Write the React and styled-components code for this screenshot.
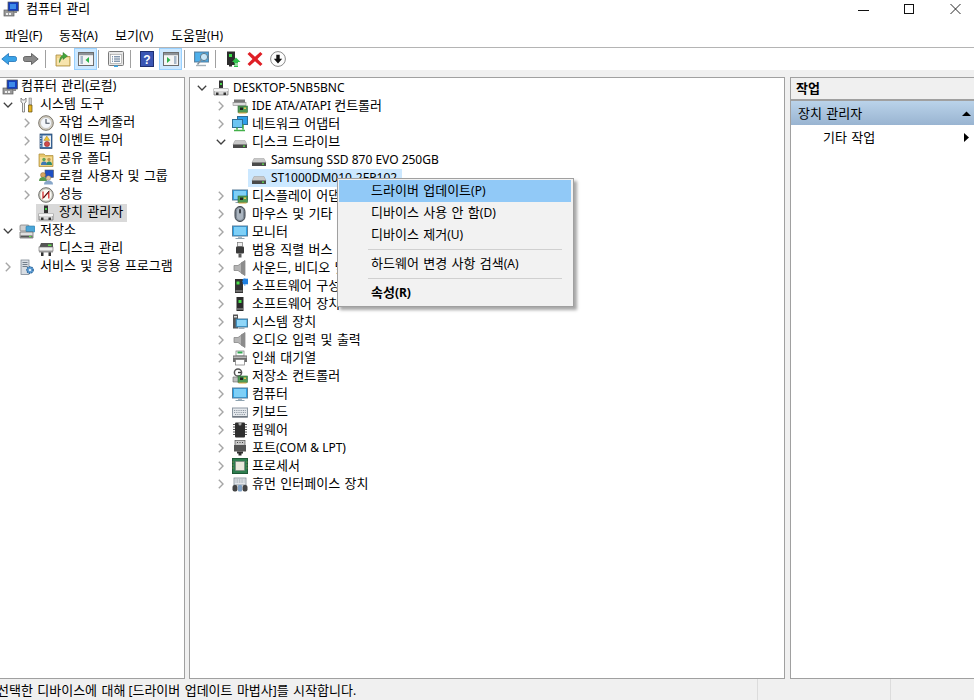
import React from "react";
import styled, { createGlobalStyle } from "styled-components";

const Global = createGlobalStyle`
  html, body { margin: 0; padding: 0; background: #fff; }
  body { font-family: "Noto Sans", "Noto Sans CJK KR", "Liberation Sans", sans-serif; font-size: 12px; color: #000; }
`;

const Window = styled.div`
  position: relative; width: 974px; height: 700px; overflow: hidden;
  display: flex; flex-direction: column; background: #fff;
`;
const TitleBar = styled.header`
  height: 25px; flex: none; display: flex; align-items: flex-start; padding: 1px 13px 0 3px; box-sizing: border-box;
`;
const TitleText = styled.span` margin: 1px 0 0 7px; line-height: 14px; `;
const WindowControls = styled.div`
  margin-left: auto; display: flex; gap: 35px; padding-top: 3px;
`;
const ControlGlyph = styled.svg` width: 11px; height: 10px; display: block; `;
const MenuBar = styled.nav`
  height: 22px; flex: none; display: flex; align-items: center; padding-left: 5px; border-bottom: 1px solid #b4b4b4;
  box-sizing: content-box;
`;
const MenuItem = styled.span` width: ${p => p.$w}px; line-height: 20px; `;
const Toolbar = styled.div` height: 22px; flex: none; display: flex; align-items: center; `;
const ToolButton = styled.div`
  width: ${p => p.$w || 23}px; height: 22px; margin-left: ${p => p.$ml || 0}px; box-sizing: border-box; flex: none;
  display: flex; align-items: center; justify-content: center;
  background: ${p => p.$on ? "#cce8ff" : "transparent"};
  border: 1px solid ${p => p.$on ? "#99d1ff" : "transparent"};
`;
const ToolSep = styled.div` width: 1px; height: 18px; background: #a0a0a0; flex: none; margin-left: ${p => p.$ml}px; `;
const Main = styled.main`
  flex: 1; display: flex; background: #f0f0f0; padding-top: 7px; min-height: 0;
`;
const Panel = styled.section`
  box-sizing: border-box; width: ${p => p.$w}px; margin-left: ${p => p.$ml || 0}px; flex: none; height: 602px;
  background: #fff; border: 1px solid #a0a0a0; border-left-width: ${p => p.$noLeft ? 0 : 1}px;
  border-right-width: ${p => p.$noRight ? 0 : 1}px; overflow: hidden; padding-top: ${p => p.$pt || 0}px;
`;
const Row = styled.div`
  position: relative; height: 18px; display: flex; align-items: center; padding-left: ${p => p.$pad}px; white-space: nowrap;
`;
const Hilite = styled.span`
  position: absolute; top: 0; bottom: 0; left: ${p => p.$left}px; width: ${p => p.$w}px; background: ${p => p.$c};
`;
const Expander = styled.span`
  width: 16px; height: 16px; flex: none; display: flex; align-items: center; position: relative;
`;
const Chevron = styled.svg` width: 10px; height: 10px; display: block; `;
const IconWrap = styled.span` position: relative; width: 16px; height: 16px; flex: none; display: block; `;
const Label = styled.span`
  position: relative; margin-left: ${p => p.$gap ?? 5}px; line-height: 16px;
  transform: translateY(${p => p.$lift}px);
`;
const Hangul = styled.span` font-size: 13px; word-spacing: 1px; line-height: 1; `;
const ActionHead = styled.div`
  height: 21px; background: #f0f0f0; border-bottom: 2px solid #a0a0a0; box-sizing: content-box; font-weight: 700; padding-left: 5px;
  line-height: 22px;
`;
const ActionGroup = styled.div`
  height: 24px; background: linear-gradient(#bad3ea, #99b4d1); display: flex; align-items: center; padding: 0 3px 0 7px;
  justify-content: space-between;
`;
const ActionItem = styled.div`
  height: 24px; display: flex; align-items: center; justify-content: space-between; padding: 0 3px 0 32px;
`;
const Tri = styled.svg` width: 9px; height: 9px; display: block; `;
const StatusBar = styled.footer`
  height: 21px; flex: none; background: #f0f0f0; display: flex; align-items: center; overflow: hidden;
`;
const StatusCell = styled.div`
  height: 21px; line-height: 23px; width: ${p => p.$w}px; flex: none; box-sizing: border-box; white-space: nowrap;
  border-right: 1px solid #dcdcdc; text-indent: ${p => p.$indent || 0}px;
`;
const ContextMenu = styled.div`
  position: absolute; left: 337px; top: 178px; width: 237px; height: 129px; box-sizing: border-box;
  background: #f2f2f2; border: 1px solid #a0a0a0; box-shadow: 3px 3px 3px rgba(0,0,0,0.35); padding: 1px;
`;
const CtxItem = styled.div`
  height: 22px; line-height: 22px; width: 232px; padding-left: 32px; box-sizing: border-box;
  background: ${p => p.$on ? "#91c9f7" : "transparent"}; font-weight: ${p => p.$bold ? 700 : 400};
`;
const CtxSep = styled.div` height: 1px; background: #d0d0d0; margin: 3px 12px 3px 29px; width: 194px; `;

const T = ({ children }) => (
  <>
    {children.split(/([\uAC00-\uD7A3]+(?: +[\uAC00-\uD7A3]+)*)/).map((part, i) =>
      i % 2 ? <Hangul key={i}>{part}</Hangul> : part
    )}
  </>
);

const Ic = ({ children, s = 16 }) => (
  <svg width={s} height={s} viewBox="0 0 16 16" style={{ display: "block" }}>{children}</svg>
);

const drive = (
  <>
    <path d="M3 6.5h10l2 4H1z" fill="#c9c9c9" stroke="#a8a8a8" strokeWidth=".6" />
    <rect x="1" y="10.5" width="14" height="3.5" fill="#4a4a4a" />
    <rect x="11" y="11.5" width="2" height="1.3" fill="#5fe04a" />
  </>
);
const tower = (
  <>
    <rect x="4.5" y="1" width="7" height="14" fill="#2b2b2b" />
    <rect x="6.5" y="4" width="3" height="3" fill="#49e04a" />
    <rect x="5" y="12" width="6" height="2" fill="#6a6a6a" />
  </>
);
const mon = (
  <>
    <rect x=".5" y="2" width="15" height="10" fill="#2aa3ea" stroke="#5a7f9a" />
    <rect x="2" y="3" width="12" height="8" fill="#7fd0f7" />
    <rect x="6" y="12" width="4" height="2" fill="#a8b8c4" />
    <rect x="3.5" y="14" width="9" height="1" fill="#8ea3b1" />
  </>
);
const card = (
  <>
    <rect x="6" y="8" width="9.5" height="6.5" fill="#4f9a55" stroke="#2f6a38" strokeWidth=".6" />
    <rect x="8" y="9.5" width="3" height="2.5" fill="#222" />
    <rect x="12" y="9.5" width="2" height="1.5" fill="#e6c84a" />
    <path d="M6.5 14.5h8v1h-8z" fill="#d8a93a" />
  </>
);
const speaker = (
  <>
    <path d="M2 5.5h4l7-5v15l-7-5H2z" fill="#b5b5b5" stroke="#7d7d7d" strokeWidth=".7" />
    <path d="M9 2.5v11l4 2V.5z" fill="#8c8c8c" />
  </>
);
const server2 = (
  <>
    <rect x="3" y="1" width="8" height="14" fill="#333" />
    <rect x="4.5" y="3.5" width="3" height="3" fill="#4ae04a" />
    <rect x="3.5" y="12" width="7" height="2" fill="#6d6d6d" />
  </>
);

const ICONS = {
  computer: (
    <>
      <rect x="1" y="9" width="10" height="6" fill="#9a9a9a" stroke="#5d5d5d" strokeWidth=".7" />
      <rect x="3" y="12" width="2" height="2" fill="#eee" /><rect x="6" y="12" width="2" height="2" fill="#eee" />
      <rect x="5" y="1" width="10.5" height="9" fill="#143fbf" stroke="#555" strokeWidth=".7" />
      <rect x="7" y="3" width="6" height="5" fill="#3d8be8" />
      <rect x="11" y="10" width="3" height="2" fill="#8b8b8b" />
    </>
  ),
  tools: (
    <>
      <path d="M2 1v4l1.5 1v9h2V6L7 5V1L5.5 3h-2z" fill="#f3f3f3" stroke="#707070" strokeWidth=".8" />
      <rect x="10" y="1" width="2.5" height="7" fill="#cfcfcf" stroke="#777" strokeWidth=".5" />
      <path d="M9.5 8h3.5v7h-3.5z" fill="#e7b422" stroke="#5b4a10" strokeWidth=".7" />
    </>
  ),
  clock: (
    <>
      <circle cx="8" cy="8" r="7.3" fill="#d9d3c3" stroke="#77736a" strokeWidth="1" />
      <circle cx="8" cy="8" r="5.5" fill="#f4f7fb" stroke="#aaa" strokeWidth=".5" />
      <path d="M8 4v4.3h3.6" fill="none" stroke="#3f4a59" strokeWidth="1.1" />
    </>
  ),
  eventlog: (
    <>
      <rect x="2" y="1" width="12" height="14.5" fill="#3d6ea5" stroke="#27466b" strokeWidth=".7" />
      <rect x="4.5" y="2.5" width="8.5" height="11.5" fill="#eef1f4" />
      <path d="M8.8 3l3 4.4h-6z" fill="#f3c42f" stroke="#8a6d10" strokeWidth=".4" />
      <circle cx="9" cy="11" r="2.6" fill="#d14a4a" stroke="#7c2020" strokeWidth=".5" />
      <path d="M2 3h1.5M2 5.5h1.5M2 8h1.5M2 10.5h1.5M2 13h1.5" stroke="#fff" strokeWidth=".7" />
    </>
  ),
  shared: (
    <>
      <path d="M1 3h5l1.5 1.5H15v11H1z" fill="#e8c76c" stroke="#a98a36" strokeWidth=".7" />
      <rect x="2" y="6" width="12" height="8.5" fill="#f4dc95" />
      <circle cx="6" cy="8.5" r="1.7" fill="#63a35c" /><path d="M3 14c0-3 1.5-3.5 3-3.5s3 .5 3 3.5z" fill="#3f78b5" />
      <circle cx="11" cy="8.5" r="1.7" fill="#c59a52" /><path d="M8.5 14c0-3 1-3.5 2.5-3.5s3 .5 3 3.5z" fill="#2f8a6e" />
    </>
  ),
  users: (
    <>
      <rect x="7" y="1" width="8.5" height="7.5" fill="#1e4fc4" stroke="#5b5b5b" strokeWidth=".6" />
      <circle cx="5" cy="6" r="2.5" fill="#d9a55f" stroke="#7c5a2d" strokeWidth=".4" />
      <path d="M1 12c0-3 2-4 4-4s4 1 4 4z" fill="#5a9a4e" />
      <circle cx="10.5" cy="9" r="2.3" fill="#e2c29b" stroke="#8a6d4a" strokeWidth=".4" />
      <path d="M6 15.5c0-3 2.2-4 4.5-4s4.5 1 4.5 4z" fill="#88a7c9" />
    </>
  ),
  perf: (
    <>
      <circle cx="8" cy="8" r="7.3" fill="#cfcfc6" stroke="#6f6f6a" strokeWidth="1" />
      <circle cx="8" cy="8" r="5.6" fill="#fbfbf6" />
      <path d="M5 4.5V11L10.8 5v6.5" fill="none" stroke="#d22a2a" strokeWidth="1.3" />
      <path d="M11 4L5.5 11" stroke="#1b1b1b" strokeWidth=".9" />
    </>
  ),
  device: (
    <>
      <rect x="6" y="0.5" width="4" height="8" fill="#333" />
      <rect x="7" y="3" width="2" height="2" fill="#46d04a" />
      <path d="M1 8.5h14V15H1z" fill="#d8d8d8" stroke="#6a6a6a" strokeWidth=".7" />
      <rect x="1" y="8.5" width="14" height="2.5" fill="#f4f4f4" />
      <rect x="3" y="12.5" width="2.5" height="2.5" fill="#333" /><rect x="10.5" y="12.5" width="2.5" height="2.5" fill="#333" />
    </>
  ),
  storage: (
    <>
      <rect x="1" y="2" width="9" height="6" rx="1" fill="#cfcfcf" stroke="#777" strokeWidth=".7" />
      <rect x="7" y="3" width="9" height="6" rx="1" fill="#4aa6d8" stroke="#2c7aa6" strokeWidth=".6" />
      <path d="M1 9h13v6H1z" fill="#e0e0e0" stroke="#5f5f5f" strokeWidth=".7" />
      <rect x="1.5" y="12.5" width="12" height="2" fill="#555" />
      <rect x="10" y="13" width="2.5" height="1" fill="#5ee04a" />
    </>
  ),
  diskmgmt: (
    <>
      <path d="M3 2h12v5H1z" fill="#555" />
      <rect x="1" y="6" width="14" height="4" fill="#efefef" stroke="#666" strokeWidth=".6" />
      <rect x="10" y="3.5" width="3.5" height="1.5" fill="#5ee04a" />
      <rect x="3" y="11" width="2.5" height="4" fill="#333" /><rect x="10.5" y="11" width="2.5" height="4" fill="#333" />
      <rect x="1" y="10" width="14" height="1.5" fill="#999" />
    </>
  ),
  services: (
    <>
      <rect x="2" y="1" width="8" height="14.5" fill="#d8dde3" stroke="#6f7a86" strokeWidth=".7" />
      <path d="M3.5 3.5h5M3.5 5.5h5M3.5 7.5h5" stroke="#66727f" strokeWidth=".9" />
      <circle cx="11" cy="11" r="3.2" fill="#5f9ed6" stroke="#2f6a9e" strokeWidth="1.4" strokeDasharray="1.4 .9" />
      <circle cx="11" cy="11" r="1.1" fill="#fff" />
    </>
  ),
  ide: (
    <>
      <path d="M2 1.5h11v4H2z" fill="#777" /><rect x="1" y="4.5" width="13" height="3" fill="#ddd" stroke="#777" strokeWidth=".5" />
      {card}
    </>
  ),
  network: (
    <>
      <rect x="5.5" y=".5" width="10" height="8" fill="#2d9fe8" stroke="#2f6d94" /><rect x=".5" y="3.5" width="10" height="8" fill="#6cc4f2" stroke="#2f6d94" />
      <path d="M5 11.5v2M11 8.5v5M2 14.5h11" stroke="#43b04a" strokeWidth="1.6" />
    </>
  ),
  disk: drive,
  display: <>{mon}{card}</>,
  mouse: (
    <>
      <rect x="3" y="0.5" width="10" height="15" rx="5" fill="#7f8a96" stroke="#3a3f46" />
      <rect x="5" y="2" width="6" height="12" rx="3" fill="#aab4bf" />
      <rect x="7" y="3" width="2" height="4.5" rx="1" fill="#3a3f46" />
    </>
  ),
  monitor: mon,
  usb: (
    <>
      <rect x="5.5" y="0.5" width="5" height="4" fill="#ececec" stroke="#777" strokeWidth=".7" />
      <rect x="4" y="4.5" width="8" height="7" rx="1" fill="#3a3a3a" />
      <rect x="6.5" y="11.5" width="3" height="4" fill="#5a5a5a" />
    </>
  ),
  sound: speaker,
  softcomp: (
    <>
      {server2}
      <path d="M11 1h5v5h-5zM12.8 0v8M10 3.5h6" fill="#1f7fe0" stroke="#1f7fe0" strokeWidth=".6" />
    </>
  ),
  softdev: tower,
  sysdev: (
    <>
      <rect x="1" y="0.5" width="5" height="14" fill="#555" />
      <rect x="2" y="2" width="3" height="1.5" fill="#ddd" />
      <rect x="4" y="5" width="11.5" height="8" fill="#33a5e8" stroke="#4c7a96" />
      <rect x="5" y="6" width="9.5" height="6" fill="#8fd6f8" />
      <rect x="6.5" y="13" width="6" height="2" fill="#9fb0bc" />
    </>
  ),
  printer: (
    <>
      <rect x="4" y="1" width="8" height="5" fill="#ffffff" stroke="#777" strokeWidth=".7" />
      <rect x="5.5" y="1.5" width="5" height="2" fill="#34a853" />
      <rect x="1" y="5.5" width="14" height="6.5" fill="#6e6e6e" />
      <rect x="3.5" y="9.5" width="9" height="5.5" fill="#fff" stroke="#777" strokeWidth=".7" />
      <rect x="1.5" y="6.5" width="13" height="1.5" fill="#b8b8b8" />
    </>
  ),
  storagectl: (
    <>
      <circle cx="6" cy="4.5" r="3.6" fill="none" stroke="#555" strokeWidth="1.5" />
      <path d="M6 4.5h3" stroke="#333" strokeWidth="1.4" />
      <path d="M1 9h9v5H1z" fill="#bdbdbd" stroke="#666" strokeWidth=".6" />
      {card}
    </>
  ),
  keyboard: (
    <>
      <rect x="0.5" y="4" width="15" height="9" fill="#e4e8ec" stroke="#8d98a3" />
      <path d="M2 6.5h12M2 8.5h12M3 10.5h10" stroke="#8e98a3" strokeWidth="1.1" strokeDasharray="1 .8" />
      <rect x="0.5" y="12" width="15" height="1.5" fill="#6f7780" />
    </>
  ),
  firmware: (
    <>
      <rect x="3" y="0.5" width="10" height="15" rx="1" fill="#2e2e2e" />
      <path d="M1 2.5h14M1 5h14M1 7.5h14M1 10h14M1 12.5h14" stroke="#555" strokeWidth="1" strokeDasharray="2 10" />
      <path d="M6.5.5h3v1.5a1.5 1.5 0 0 1-3 0z" fill="#aaa" />
    </>
  ),
  port: (
    <>
      <rect x="3" y="0.5" width="10" height="5" fill="#c8c8c8" stroke="#555" strokeWidth=".7" />
      <path d="M5 2.5h1M7.5 2.5h1M10 2.5h1" stroke="#444" strokeWidth="1" />
      <rect x="2" y="5" width="12" height="6.5" fill="#555" />
      <path d="M5 11.5h6v2H9.5v2h-3v-2H5z" fill="#2e2e2e" />
    </>
  ),
  cpu: (
    <>
      <rect x=".5" y=".5" width="15" height="15" fill="#2e7d4f" stroke="#1d5a36" />
      <rect x="3.5" y="3.5" width="9" height="9" fill="#e9e9dc" stroke="#777" strokeWidth=".5" />
      <path d="M.5 4h1M.5 7h1M.5 10h1M14.5 4h1M14.5 7h1M14.5 10h1" stroke="#d8b24a" strokeWidth=".7" />
    </>
  ),
  hid: (
    <>
      <rect x="2" y="2" width="12" height="7" fill="#e2e6ea" stroke="#7f8a95" strokeWidth=".8" />
      <path d="M3.5 4h9M3.5 6h9" stroke="#8d97a1" strokeDasharray="1 .7" />
      <rect x="0.5" y="9" width="5" height="6.5" rx="2" fill="#444" />
      <rect x="10.5" y="9" width="5" height="6.5" rx="2" fill="#444" />
      <rect x="6" y="9" width="4" height="6.5" rx="1" fill="#7fa0c4" />
    </>
  ),
  back: (
    <path d="M.8 8L7.5 2.5v3h6.2c1.2 0 1.8.8 1.8 1.8v1.4c0 1-.6 1.8-1.8 1.8H7.5v3z" fill="#3aa3e8" stroke="#1d6fb4" strokeWidth=".8" />
  ),
  forward: (
    <path d="M15.2 8L8.5 2.5v3H2.3C1.1 5.5.5 6.3.5 7.3v1.4c0 1 .6 1.8 1.8 1.8h6.2v3z" fill="#8a8a8a" stroke="#4f4f4f" strokeWidth=".8" />
  ),
  upfolder: (
    <>
      <path d="M1 4h5l1 1.5h8v9.5H1z" fill="#f0d48a" stroke="#a88b3f" strokeWidth=".8" />
      <rect x="2" y="7" width="12" height="7" fill="#f7e4ad" />
      <path d="M4.5 11.5C4.5 7 6 5 8 4.3V1.5L12.5 5 8 8.5V6.3C6.7 7 5.7 8.5 4.5 11.5z" fill="#43a53c" stroke="#2a7525" strokeWidth=".5" />
    </>
  ),
  paneleft: (
    <>
      <rect x=".5" y="1.5" width="15" height="13" fill="#f5f5f5" stroke="#6d6d6d" />
      <rect x="1" y="2" width="14" height="2.2" fill="#8d9298" />
      <path d="M2.5 6h2.5M2.5 8h2.5M2.5 10h2.5M2.5 12h2.5" stroke="#5f7ea0" strokeWidth="1.1" />
      <path d="M11 6v6L7.5 9z" fill="#2cb34a" />
    </>
  ),
  props: (
    <>
      <rect x=".5" y=".5" width="15" height="14" rx="1" fill="#e7e7e7" stroke="#7a7a7a" />
      <rect x="2.5" y="3.5" width="11" height="9" fill="#fdfdfd" stroke="#9b9b9b" strokeWidth=".6" />
      <path d="M4 5.8h1M6 5.8h6M4 8h1M6 8h6M4 10.2h1M6 10.2h6" stroke="#4d6a8a" />
      <rect x="6" y="14.5" width="4" height="1.5" fill="#39a7e8" />
    </>
  ),
  help: (
    <>
      <rect x="1.5" y=".5" width="13" height="15" fill="#3a56b4" stroke="#1f2f70" />
      <text x="8" y="12.5" textAnchor="middle" fontSize="12" fontWeight="700" fontFamily="Liberation Sans" fill="#fff">?</text>
    </>
  ),
  paneright: (
    <>
      <rect x=".5" y="1.5" width="15" height="13" fill="#f5f5f5" stroke="#6d6d6d" />
      <rect x="1" y="2" width="14" height="2.2" fill="#8d9298" />
      <path d="M11 6h2.5M11 8h2.5M11 10h2.5M11 12h2.5" stroke="#5f7ea0" strokeWidth="1.1" />
      <path d="M4 6v6l3.5-3z" fill="#2cb34a" />
    </>
  ),
  console: (
    <>
      <rect x=".5" y="1" width="14" height="10" fill="#3d9fe0" stroke="#5e84a0" />
      <rect x="1.5" y="2" width="12" height="8" fill="#4fb0ea" />
      <path d="M2 14.5h10" stroke="#a5b0b8" strokeWidth="1.4" />
      <circle cx="10" cy="6" r="3.6" fill="#c8e6f7" stroke="#5f7a8c" />
      <path d="M7.3 8.7L3.5 13.5" stroke="#7f8e9a" strokeWidth="1.4" />
    </>
  ),
  enable: (
    <>
      <rect x="2" y="0.5" width="8" height="13.5" fill="#2d2d2d" />
      <rect x="4" y="3" width="3" height="3" fill="#3be04a" />
      <path d="M4 14h3v1.5H4z" fill="#2d2d2d" />
      <path d="M7 11l4-4.5 4.5 4.5H13v1.5H9V11z" fill="#2fc24a" />
      <path d="M9 13.5h4v1H9zM9 15h4v1H9z" fill="#2fc24a" />
    </>
  ),
  redx: (
    <path d="M2.7 1L8 5.8 13.3 1 15.5 3 10.5 8l5 5-2.2 2L8 10.2 2.7 15 .5 13l5-5-5-5z" fill="#df1f26" />
  ),
  down: (
    <>
      <circle cx="8" cy="8" r="7.4" fill="#fdfdfd" stroke="#8b8b8b" />
      <path d="M6.3 3.8h3.4v4h2.5L8 12.4 3.8 7.8h2.5z" fill="#111" />
    </>
  ),
};

const Icon = ({ name }) => <IconWrap><Ic>{ICONS[name]}</Ic></IconWrap>;

const Arrow = ({ open }) => (
  <Chevron viewBox="0 0 10 10">
    {open
      ? <path d="M.8 2.8L5 7l4.2-4.2" fill="none" stroke="#404040" strokeWidth="1.3" />
      : <path d="M2.8.8L7 5 2.8 9.2" fill="none" stroke="#a6a6a6" strokeWidth="1.4" />}
  </Chevron>
);

const leftRows = [
  { pad: 2, icon: "computer", text: "컴퓨터 관리(로컬)", gap: 3 },
  { pad: 3, exp: "open", icon: "tools", text: "시스템 도구" },
  { pad: 22, exp: "closed", icon: "clock", text: "작업 스케줄러" },
  { pad: 22, exp: "closed", icon: "eventlog", text: "이벤트 뷰어" },
  { pad: 22, exp: "closed", icon: "shared", text: "공유 폴더" },
  { pad: 22, exp: "closed", icon: "users", text: "로컬 사용자 및 그룹" },
  { pad: 22, exp: "closed", icon: "perf", text: "성능" },
  { pad: 22, icon: "device", text: "장치 관리자", hi: true },
  { pad: 3, exp: "open", icon: "storage", text: "저장소" },
  { pad: 22, icon: "diskmgmt", text: "디스크 관리" },
  { pad: 3, exp: "closed", icon: "services", text: "서비스 및 응용 프로그램" },
];

const centerRows = [
  { d: 0, exp: "open", icon: "device", text: "DESKTOP-5NB5BNC" },
  { d: 1, exp: "closed", icon: "ide", text: "IDE ATA/ATAPI 컨트롤러" },
  { d: 1, exp: "closed", icon: "network", text: "네트워크 어댑터" },
  { d: 1, exp: "open", icon: "disk", text: "디스크 드라이브" },
  { d: 2, icon: "disk", text: "Samsung SSD 870 EVO 250GB" },
  { d: 2, icon: "disk", text: "ST1000DM010-2EP102", sel: true },
  { d: 1, exp: "closed", icon: "display", text: "디스플레이 어댑터" },
  { d: 1, exp: "closed", icon: "mouse", text: "마우스 및 기타 포인팅 장치" },
  { d: 1, exp: "closed", icon: "monitor", text: "모니터" },
  { d: 1, exp: "closed", icon: "usb", text: "범용 직렬 버스 컨트롤러" },
  { d: 1, exp: "closed", icon: "sound", text: "사운드, 비디오 및 게임 컨트롤러" },
  { d: 1, exp: "closed", icon: "softcomp", text: "소프트웨어 구성 요소" },
  { d: 1, exp: "closed", icon: "softdev", text: "소프트웨어 장치" },
  { d: 1, exp: "closed", icon: "sysdev", text: "시스템 장치" },
  { d: 1, exp: "closed", icon: "sound", text: "오디오 입력 및 출력" },
  { d: 1, exp: "closed", icon: "printer", text: "인쇄 대기열" },
  { d: 1, exp: "closed", icon: "storagectl", text: "저장소 컨트롤러" },
  { d: 1, exp: "closed", icon: "monitor", text: "컴퓨터" },
  { d: 1, exp: "closed", icon: "keyboard", text: "키보드" },
  { d: 1, exp: "closed", icon: "firmware", text: "펌웨어" },
  { d: 1, exp: "closed", icon: "port", text: "포트(COM & LPT)" },
  { d: 1, exp: "closed", icon: "cpu", text: "프로세서" },
  { d: 1, exp: "closed", icon: "hid", text: "휴먼 인터페이스 장치" },
];

const TreeRow = ({ pad, exp, noExp, icon, text, gap, lift = 0, children }) => (
  <Row $pad={pad}>
    {children}
    {!noExp && (
      <Expander>{exp && <Arrow open={exp === "open"} />}</Expander>
    )}
    <Icon name={icon} />
    <Label $gap={gap} $lift={lift}><T>{text}</T></Label>
  </Row>
);

export default function App() {
  return (
    <Window>
      <Global />
      <TitleBar>
        <Icon name="computer" />
        <TitleText><T>컴퓨터 관리</T></TitleText>
        <WindowControls>
          <ControlGlyph viewBox="0 0 11 10"><path d="M0 6.5h11" stroke="#111" /></ControlGlyph>
          <ControlGlyph viewBox="0 0 11 10"><rect x=".5" y=".5" width="9" height="9" fill="none" stroke="#111" /></ControlGlyph>
          <ControlGlyph viewBox="0 0 11 10"><path d="M.5 0l10 10M10.5 0l-10 10" stroke="#111" strokeWidth=".9" /></ControlGlyph>
        </WindowControls>
      </TitleBar>
      <MenuBar>
        <MenuItem $w={54}><T>파일(F)</T></MenuItem>
        <MenuItem $w={56}><T>동작(A)</T></MenuItem>
        <MenuItem $w={56}><T>보기(V)</T></MenuItem>
        <MenuItem $w={60}><T>도움말(H)</T></MenuItem>
      </MenuBar>
      <Toolbar>
        <ToolButton $w={18}><Icon name="back" /></ToolButton>
        <ToolButton $w={22} $ml={2}><Icon name="forward" /></ToolButton>
        <ToolSep $ml={3} />
        <ToolButton $ml={5}><Icon name="upfolder" /></ToolButton>
        <ToolButton $on><Icon name="paneleft" /></ToolButton>
        <ToolSep $ml={1} />
        <ToolButton $ml={5}><Icon name="props" /></ToolButton>
        <ToolSep $ml={3} />
        <ToolButton $ml={4}><Icon name="help" /></ToolButton>
        <ToolButton $on $ml={1}><Icon name="paneright" /></ToolButton>
        <ToolSep $ml={2} />
        <ToolButton $ml={5}><Icon name="console" /></ToolButton>
        <ToolSep $ml={2} />
        <ToolButton $w={22} $ml={6}><Icon name="enable" /></ToolButton>
        <ToolButton $w={22}><Icon name="redx" /></ToolButton>
        <ToolButton $w={22} $ml={1}><Icon name="down" /></ToolButton>
      </Toolbar>
      <Main>
        <Panel $w={185} $noLeft>
          {leftRows.map((r, i) => (
            <TreeRow key={i} pad={r.pad} exp={r.exp} noExp={i === 0} icon={r.icon} text={r.text} gap={r.gap} lift={-1}>
              {r.hi && <Hilite $left={36} $w={91} $c="#d9d9d9" />}
            </TreeRow>
          ))}
        </Panel>
        <Panel $w={596} $ml={4} $pt={1}>
          {centerRows.map((r, i) => (
            <TreeRow key={i} pad={7 + r.d * 19} exp={r.exp} icon={r.icon} text={r.text} gap={4}>
              {r.sel && <Hilite $left={58} $w={154} $c="#cce8ff" />}
            </TreeRow>
          ))}
        </Panel>
        <Panel $w={184} $ml={5} $noRight>
          <ActionHead><T>작업</T></ActionHead>
          <ActionGroup>
            <span><T>장치 관리자</T></span>
            <Tri viewBox="0 0 9 9"><path d="M0 7L4.5 2.5 9 7z" fill="#000" /></Tri>
          </ActionGroup>
          <ActionItem>
            <span><T>기타 작업</T></span>
            <Tri viewBox="0 0 9 9"><path d="M2 0l5 4.5L2 9z" fill="#000" /></Tri>
          </ActionItem>
        </Panel>
      </Main>
      <StatusBar>
        <StatusCell $w={758} $indent={-3}><T>선택한 디바이스에 대해 [드라이버 업데이트 마법사]를 시작합니다.</T></StatusCell>
        <StatusCell $w={133} />
      </StatusBar>
      <ContextMenu>
        <CtxItem $on><T>드라이버 업데이트(P)</T></CtxItem>
        <CtxItem><T>디바이스 사용 안 함(D)</T></CtxItem>
        <CtxItem><T>디바이스 제거(U)</T></CtxItem>
        <CtxSep />
        <CtxItem><T>하드웨어 변경 사항 검색(A)</T></CtxItem>
        <CtxSep />
        <CtxItem $bold><T>속성(R)</T></CtxItem>
      </ContextMenu>
    </Window>
  );
}
